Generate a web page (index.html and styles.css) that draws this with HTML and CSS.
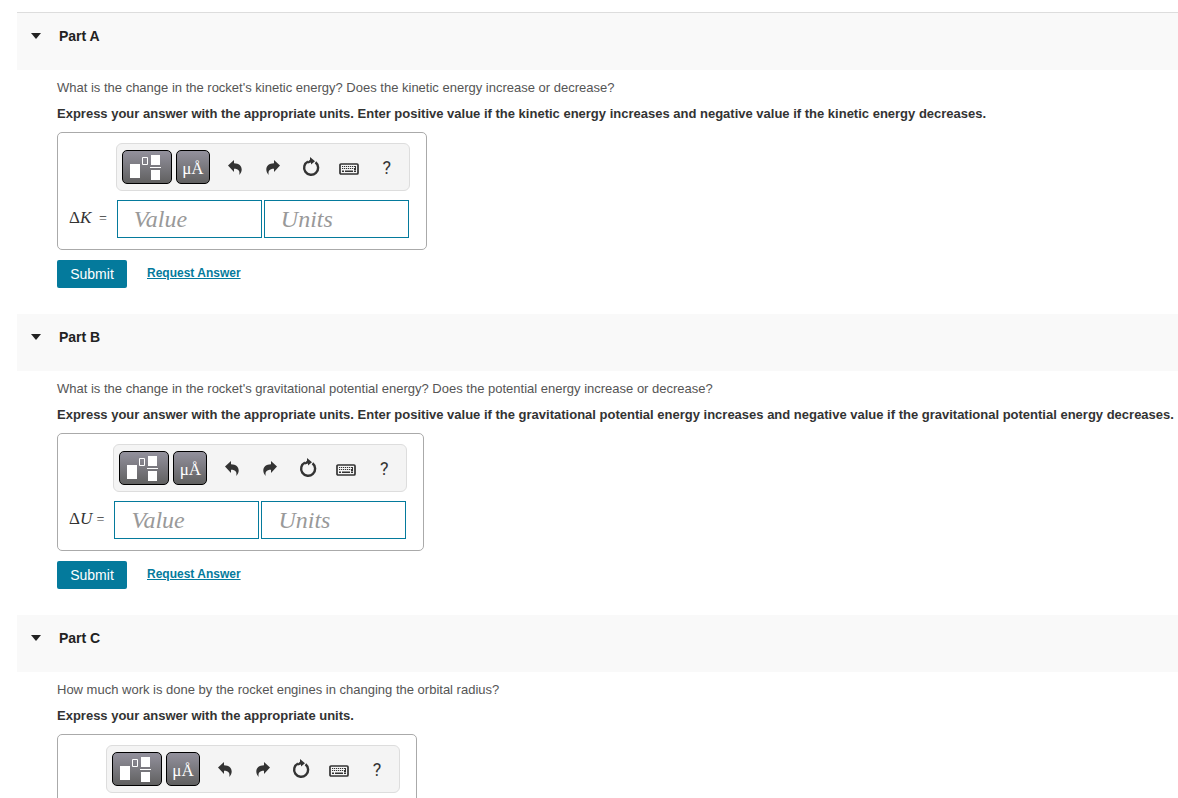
FILE: index.html
```html
<!DOCTYPE html>
<html lang="en">
<head>
  <meta charset="UTF-8">
  <meta name="viewport" content="width=device-width, initial-scale=1.0">
  <title>Rocket energy problem</title>
  <link rel="stylesheet" href="styles.css">
</head>
<body>
  <svg class="sprite" aria-hidden="true">
    <symbol id="caret" viewBox="0 0 10 6"><path d="M0 0h10L5 6z"/></symbol>
    <symbol id="templates" viewBox="0 1 36 28">
      <path d="M1 12h10v14H1zM22 3h9v10h-9zM22 18h9v10h-9zM21 15h11v1H21z"/>
      <path d="M13.5 5.500h5v7h-5z" fill="none" stroke="currentColor"/>
    </symbol>
    <symbol id="undo" viewBox="0 0 14 15">
      <path d="M0 5.500L6 0v3.200C11 3.200 13.700 6 13.700 9.500c0 2-1 4-2.500 5.500 1-4-.500-6.300-5.200-6.300V12z"/>
    </symbol>
    <symbol id="redo" viewBox="0 0 14 15">
      <path d="M14 5.500L8 0v3.200C3 3.200.3 6 .3 9.500c0 2 1 4 2.500 5.500-1-4 .5-6.300 5.200-6.300V12z"/>
    </symbol>
    <symbol id="reset" viewBox="0 0 18 20">
      <path d="M6 4.500A7 7 0 1 0 13.500 5.300" fill="none" stroke="currentColor" stroke-width="2.400"/>
      <path d="M5 5.200L8 2.800V0L13 4.200 9 7.500V5.500L6 6.500z"/>
    </symbol>
    <symbol id="keyboard" viewBox="0 0 20 12">
      <rect x="1" y="1" width="18" height="10" rx="1" fill="none" stroke="currentColor" stroke-width="1.700"/>
      <path d="M3 3.500h14M3 5.500h14" fill="none" stroke="currentColor" stroke-width="1.200" stroke-dasharray="1.200 .8"/>
      <path d="M3 7.500h2v1.500H3zM6 7.500h8v1.500H6zM15 7.500h2v1.500h-2zM16 3h1v4h-2V6h1z"/>
    </symbol>
  </svg>

  <main>
    <section class="part">
      <h2 class="part-header">
        <button type="button" class="part-toggle"><svg class="caret"><use href="#caret"/></svg>Part A</button>
      </h2>
      <form class="part-body">
        <p class="question">What is the change in the rocket's kinetic energy? Does the kinetic energy increase or decrease?</p>
        <p class="instructions">Express your answer with the appropriate units. Enter positive value if the kinetic energy increases and negative value if the kinetic energy decreases.</p>
        <div class="answer">
          <div class="toolbar">
            <button type="button" class="tool tool-wide" aria-label="Templates"><svg width="36" height="28"><use href="#templates"/></svg></button>
            <button type="button" class="tool">μÅ</button>
            <button type="button" class="icon" aria-label="Undo"><svg width="14" height="15"><use href="#undo"/></svg></button>
            <button type="button" class="icon" aria-label="Redo"><svg width="14" height="15"><use href="#redo"/></svg></button>
            <button type="button" class="icon" aria-label="Reset"><svg width="18" height="20"><use href="#reset"/></svg></button>
            <button type="button" class="icon icon-low" aria-label="Keyboard shortcuts"><svg width="20" height="12"><use href="#keyboard"/></svg></button>
            <button type="button" class="icon">?</button>
          </div>
          <label class="symbol" for="valueA">Δ<i>K</i>&thinsp; <span class="equals">=</span></label>
          <div class="fields">
            <input type="text" id="valueA" placeholder="Value">
            <input type="text" id="unitsA" placeholder="Units" aria-label="Units">
          </div>
        </div>
        <div class="actions">
          <button type="submit" class="submit">Submit</button>
          <a href="#" class="request">Request Answer</a>
        </div>
      </form>
    </section>

    <section class="part">
      <h2 class="part-header">
        <button type="button" class="part-toggle"><svg class="caret"><use href="#caret"/></svg>Part B</button>
      </h2>
      <form class="part-body">
        <p class="question">What is the change in the rocket's gravitational potential energy? Does the potential energy increase or decrease?</p>
        <p class="instructions">Express your answer with the appropriate units. Enter positive value if the gravitational potential energy increases and negative value if the gravitational potential energy decreases.</p>
        <div class="answer">
          <div class="toolbar">
            <button type="button" class="tool tool-wide" aria-label="Templates"><svg width="36" height="28"><use href="#templates"/></svg></button>
            <button type="button" class="tool">μÅ</button>
            <button type="button" class="icon" aria-label="Undo"><svg width="14" height="15"><use href="#undo"/></svg></button>
            <button type="button" class="icon" aria-label="Redo"><svg width="14" height="15"><use href="#redo"/></svg></button>
            <button type="button" class="icon" aria-label="Reset"><svg width="18" height="20"><use href="#reset"/></svg></button>
            <button type="button" class="icon icon-low" aria-label="Keyboard shortcuts"><svg width="20" height="12"><use href="#keyboard"/></svg></button>
            <button type="button" class="icon">?</button>
          </div>
          <label class="symbol" for="valueB">Δ<i>U</i> <span class="equals">=</span></label>
          <div class="fields">
            <input type="text" id="valueB" placeholder="Value">
            <input type="text" id="unitsB" placeholder="Units" aria-label="Units">
          </div>
        </div>
        <div class="actions">
          <button type="submit" class="submit">Submit</button>
          <a href="#" class="request">Request Answer</a>
        </div>
      </form>
    </section>

    <section class="part">
      <h2 class="part-header">
        <button type="button" class="part-toggle"><svg class="caret"><use href="#caret"/></svg>Part C</button>
      </h2>
      <form class="part-body">
        <p class="question">How much work is done by the rocket engines in changing the orbital radius?</p>
        <p class="instructions">Express your answer with the appropriate units.</p>
        <div class="answer answer-short">
          <div class="toolbar">
            <button type="button" class="tool tool-wide" aria-label="Templates"><svg width="36" height="28"><use href="#templates"/></svg></button>
            <button type="button" class="tool">μÅ</button>
            <button type="button" class="icon" aria-label="Undo"><svg width="14" height="15"><use href="#undo"/></svg></button>
            <button type="button" class="icon" aria-label="Redo"><svg width="14" height="15"><use href="#redo"/></svg></button>
            <button type="button" class="icon" aria-label="Reset"><svg width="18" height="20"><use href="#reset"/></svg></button>
            <button type="button" class="icon icon-low" aria-label="Keyboard shortcuts"><svg width="20" height="12"><use href="#keyboard"/></svg></button>
            <button type="button" class="icon">?</button>
          </div>
        </div>
      </form>
    </section>
  </main>
</body>
</html>
```
FILE: styles.css
```css
* {
  box-sizing: border-box;
}

body {
  margin: 0;
  padding: 12px 0 0 17px;
  background-color: #fff;
  color: #333;
  font-family: "Liberation Sans", Arial, sans-serif;
  font-size: 13px;
}

button,
input {
  margin: 0;
  font-family: inherit;
}

button {
  padding: 0;
  border: none;
  background: none;
  cursor: pointer;
}

svg {
  display: block;
  fill: currentColor;
}

.sprite {
  display: none;
}

main {
  border-top: 1px solid #ddd;
}

.part-header {
  height: 57px;
  margin: 0;
  padding: 13px 14px;
  background-color: #f9f9f9;
}

.part-toggle {
  display: flex;
  align-items: center;
  gap: 18px;
  color: #222;
  font-size: 14px;
  font-weight: bold;
  line-height: 20px;
}

.caret {
  width: 10px;
  height: 6px;
}

.part-body {
  padding: 8px 0 26px 40px;
}

.question,
.instructions {
  margin: 0 0 6px;
  line-height: 20px;
}

.question {
  color: #555;
}

.instructions {
  margin-bottom: 8px;
  font-weight: bold;
}

.answer {
  display: inline-grid;
  grid-template-columns: auto auto;
  column-gap: 9px;
  row-gap: 9px;
  padding: 10px 16px 11px 11px;
  border: 1px solid #aaa;
  border-radius: 5px;
  vertical-align: top;
}

.answer-short {
  grid-template-columns: 28px auto;
  min-height: 118px;
}

.toolbar {
  grid-column: 2;
  display: flex;
  align-items: center;
  height: 48px;
  padding: 0 3px 0 5px;
  border: 1px solid #ddd;
  border-radius: 6px;
  background-color: #f4f4f4;
}

.tool {
  display: flex;
  align-items: center;
  justify-content: center;
  width: 34px;
  height: 34px;
  margin-right: 6px;
  padding-top: 4px;
  border: 1px solid #000;
  border-radius: 5px;
  background: linear-gradient(#93919d, #606060);
  color: #fff;
  font-family: "Liberation Serif", serif;
  font-size: 17px;
}

.tool-wide {
  width: 50px;
  margin-right: 4px;
  padding-top: 0;
}

.icon {
  display: flex;
  align-items: center;
  justify-content: center;
  width: 38px;
  height: 34px;
  color: #333;
  font-family: Roboto, sans-serif;
  font-size: 18px;
}

.icon-low {
  padding-top: 4px;
}

.symbol {
  padding-top: 8px;
  font-family: "Liberation Serif", serif;
  font-size: 17px;
  line-height: 20px;
}

.equals {
  font-size: 14px;
}

.fields {
  display: flex;
  gap: 2px;
  padding: 0 1px;
}

.fields input {
  width: 145px;
  height: 38px;
  padding: 0 16px;
  border: 1px solid #047a9c;
  border-radius: 0;
  color: #333;
  font-family: "Liberation Serif", serif;
  font-size: 24px;
}

.fields input::placeholder {
  color: #999;
  font-style: italic;
}

.actions {
  display: flex;
  align-items: center;
  gap: 20px;
  margin-top: 10px;
}

.submit {
  width: 70px;
  height: 28px;
  border-radius: 2px;
  background-color: #047a9c;
  color: #fff;
  font-size: 14px;
}

.submit:hover {
  background-color: #035f79;
}

.request {
  padding-bottom: 2px;
  color: #047a9c;
  font-size: 12px;
  font-weight: bold;
}
```
